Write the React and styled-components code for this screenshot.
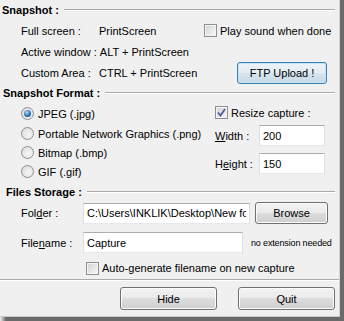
import React from "react";
import styled, { createGlobalStyle } from "styled-components";

const GlobalStyle = createGlobalStyle`
  html, body {
    margin: 0;
    padding: 0;
    background: #f0f0f0;
  }
  body {
    font-family: "Liberation Sans", Arial, sans-serif;
    font-size: 11px;
    color: #000;
  }
`;

const Frame = styled.div`
  width: 344px;
  height: 321px;
  box-sizing: border-box;
  padding: 0 4px 4px 0;
  background: linear-gradient(to right, #f0f0f0 0, #6a6a6a 6px);
`;

const Window = styled.div`
  width: 340px;
  height: 317px;
  box-sizing: border-box;
  background: #f0f0f0;
  border-right: 1px solid #d4d4d4;
  border-bottom: 1px solid #c8c8c8;
  display: flex;
  flex-direction: column;
`;

const SectionTitle = styled.div`
  display: flex;
  align-items: center;
  height: ${(p) => p.$h}px;
  padding-left: ${(p) => p.$indent}px;
  padding-right: 4px;
  font-weight: bold;
  white-space: nowrap;

  &::after {
    content: "";
    flex: 1;
    margin-left: 5px;
    border-top: 1px solid #a9a9a9;
    border-bottom: 1px solid #ffffff;
  }
`;

const TwoCols = styled.div`
  display: grid;
  grid-template-columns: ${(p) => p.$left}px 1fr;
  padding-left: 21px;
`;

const Column = styled.div`
  display: flex;
  flex-direction: column;
`;

const Row = styled.div`
  display: flex;
  align-items: center;
  height: ${(p) => p.$h}px;
  margin-top: ${(p) => p.$mt || 0}px;
  white-space: nowrap;
`;

const KeyLabel = styled.span`
  display: inline-block;
  min-width: ${(p) => p.$w}px;
  margin-right: 3px;
`;

const RightRow = styled(Row)`
  justify-content: flex-end;
  padding-right: 12px;
`;

const Box = styled.span`
  width: 13px;
  height: 13px;
  box-sizing: border-box;
  border: 1px solid #8e8f8f;
  background: linear-gradient(135deg, #d2d2d2 0%, #f8f8f8 100%);
  box-shadow: inset 0 0 0 1px #f4f4f4;
  margin-right: 3px;
  display: inline-flex;
  align-items: center;
  justify-content: center;
  flex-shrink: 0;
`;

const Radio = styled.span`
  width: 13px;
  height: 13px;
  box-sizing: border-box;
  border-radius: 50%;
  border: 1px solid #8e8f8f;
  background: radial-gradient(circle at 60% 60%, #f6f6f6 0%, #d8d8d8 100%);
  margin-right: 4px;
  display: inline-flex;
  align-items: center;
  justify-content: center;
  flex-shrink: 0;

  &::after {
    content: "";
    display: ${(p) => (p.$on ? "block" : "none")};
    width: 7px;
    height: 7px;
    border-radius: 50%;
    background: radial-gradient(circle at 40% 35%, #b6dcf6 0%, #2a74b8 55%, #0d3a6b 100%);
  }
`;

const Check = ({ checked }) => (
  <Box>
    {checked && (
      <svg width="9" height="9" viewBox="0 0 9 9">
        <path d="M1 4.5 L3.5 7.5 L8 1" fill="none" stroke="#4a5f97" strokeWidth="1.8" />
      </svg>
    )}
  </Box>
);

const TextBox = styled.input`
  box-sizing: border-box;
  width: ${(p) => p.$w}px;
  height: ${(p) => p.$h || 21}px;
  margin: 0 0 0 ${(p) => p.$ml || 0}px;
  padding: 0 3px;
  border: 1px solid #dbdfe6;
  border-top-color: #abadb3;
  border-bottom-color: #e3e9ef;
  background: #fff;
  font-family: "Liberation Sans", Arial, sans-serif;
  font-size: 11px;
  color: #000;
  outline: none;
`;

const Button = styled.button`
  box-sizing: border-box;
  width: ${(p) => p.$w}px;
  height: ${(p) => p.$h}px;
  margin-left: ${(p) => p.$ml || 0}px;
  padding: 0;
  border: 1px solid ${(p) => (p.$default ? "#3c7fb1" : "#707070")};
  border-radius: 3px;
  background: ${(p) =>
    p.$default
      ? "linear-gradient(#eef4f8 0%, #e4edf3 49%, #d6e4ee 50%, #c9dbe8 100%)"
      : "linear-gradient(#f2f2f2 0%, #ebebeb 49%, #dddddd 50%, #cfcfcf 100%)"};
  box-shadow: inset 0 0 0 1px ${(p) => (p.$default ? "#c7e3f6" : "#fcfcfc")};
  font-family: "Liberation Sans", Arial, sans-serif;
  font-size: 11px;
  color: #000;
`;

const FieldLabel = styled.span`
  display: inline-block;
  width: ${(p) => p.$w}px;
`;

const Hint = styled.span`
  margin-left: 8px;
  font-size: 9px;
  letter-spacing: -0.15px;
`;

const Separator = styled.div`
  margin-top: 3px;
  border-top: 1px solid #a9a9a9;
  border-bottom: 1px solid #fff;
`;

const Footer = styled.div`
  display: flex;
  justify-content: flex-end;
  padding: 6px 4px 0 0;
`;

const App = () => {
  return (
    <>
      <GlobalStyle />
      <Frame>
        <Window>
          <SectionTitle $h={20} $indent={2}>Snapshot :</SectionTitle>
          <TwoCols $left={183}>
            <Column>
              <Row $h={21}>
                <KeyLabel $w={75}>Full screen :</KeyLabel>
                <span>PrintScreen</span>
              </Row>
              <Row $h={21}>
                <KeyLabel $w={0}>Active window :</KeyLabel>
                <span>ALT + PrintScreen</span>
              </Row>
              <Row $h={21}>
                <KeyLabel $w={75}>Custom Area :</KeyLabel>
                <span>CTRL + PrintScreen</span>
              </Row>
            </Column>
            <Column>
              <Row $h={21}>
                <Check />
                <span>Play sound when done</span>
              </Row>
              <Row $h={21} />
              <RightRow $h={21}>
                <Button $default $w={90} $h={22}>
                  FTP Upload !
                </Button>
              </RightRow>
            </Column>
          </TwoCols>

          <SectionTitle $h={20} $indent={3}>Snapshot Format :</SectionTitle>
          <TwoCols $left={194}>
            <Column>
              <Row $h={21}>
                <Radio $on />
                <span>JPEG (.jpg)</span>
              </Row>
              <Row $h={19}>
                <Radio />
                <span>Portable Network Graphics (.png)</span>
              </Row>
              <Row $h={19}>
                <Radio />
                <span>Bitmap (.bmp)</span>
              </Row>
              <Row $h={19}>
                <Radio />
                <span>GIF (.gif)</span>
              </Row>
            </Column>
            <Column>
              <Row $h={19}>
                <Check checked />
                <span>Resize capture :</span>
              </Row>
              <Row $h={21} $mt={3}>
                <FieldLabel $w={44}>
                  <u>W</u>idth :
                </FieldLabel>
                <TextBox $w={66} $h={21} readOnly value="200" />
              </Row>
              <Row $h={21} $mt={7}>
                <FieldLabel $w={44}>
                  H<u>e</u>ight :
                </FieldLabel>
                <TextBox $w={66} $h={21} readOnly value="150" />
              </Row>
            </Column>
          </TwoCols>

          <SectionTitle $h={21} $indent={6}>Files Storage :</SectionTitle>
          <TwoCols $left={319}>
            <Column>
              <Row $h={22}>
                <FieldLabel $w={62}>
                  Fol<u>d</u>er :
                </FieldLabel>
                <TextBox $w={167} readOnly value="C:\Users\INKLIK\Desktop\New folder" />
                <Button $w={73} $h={22} $ml={5}>
                  Browse
                </Button>
              </Row>
              <Row $h={21} $mt={8}>
                <FieldLabel $w={62}>
                  File<u>n</u>ame :
                </FieldLabel>
                <TextBox $w={160} readOnly value="Capture" />
                <Hint>no extension needed</Hint>
              </Row>
              <Row $h={16} $mt={7}>
                <FieldLabel $w={65} />
                <Check />
                <span>Auto-generate filename on new capture</span>
              </Row>
            </Column>
          </TwoCols>

          <Separator />
          <Footer>
            <Button $w={97} $h={23}>
              Hide
            </Button>
            <Button $w={97} $h={23} $ml={21}>
              Quit
            </Button>
          </Footer>
        </Window>
      </Frame>
    </>
  );
};

export default App;
